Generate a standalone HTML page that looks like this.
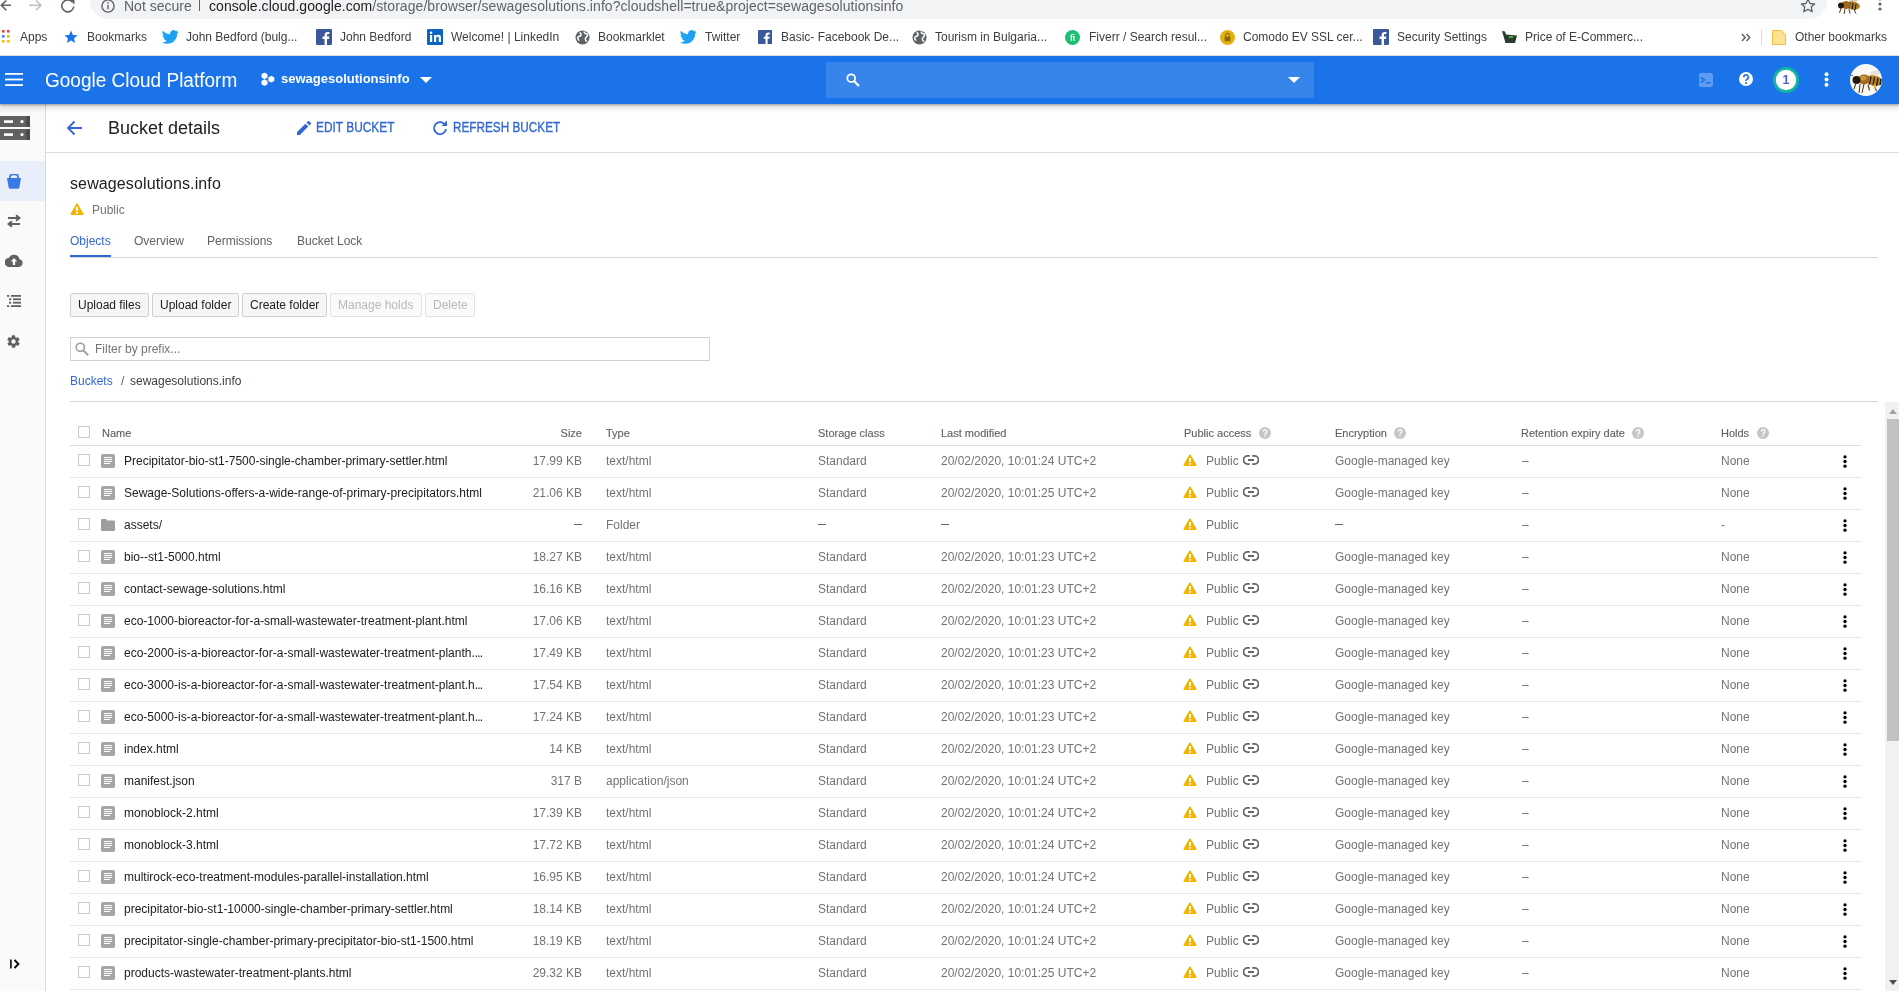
<!DOCTYPE html>
<html><head><meta charset="utf-8"><style>
*{box-sizing:border-box;margin:0;padding:0}
html,body{width:1899px;height:991px;overflow:hidden;background:#fff;font-family:"Liberation Sans",sans-serif;color:#202124;position:relative}
#wrap{position:absolute;left:0;top:0;width:1899px;height:991px;will-change:transform}
.a{position:absolute;white-space:nowrap}
#chrome{position:absolute;left:0;top:0;width:1899px;height:56px;background:#fff;z-index:4}
#omni{position:absolute;left:90px;top:-18px;width:1737px;height:37px;border-radius:18px;background:#f1f3f4}
#bmbar{position:absolute;left:0;top:19px;width:1899px;height:37px;border-bottom:1px solid #dadce0}
.bm{position:absolute;top:30px;font-size:12px;line-height:14px;color:#3c4043}
#hdr{position:absolute;left:0;top:56px;width:1899px;height:48px;background:#1a73e8;box-shadow:0 1px 2px rgba(0,0,0,.3),0 2px 6px 2px rgba(0,0,0,.15);z-index:3}
#side{position:absolute;left:0;top:104px;width:46px;height:887px;background:#fafafa;border-right:1px solid #dadada}
.row{position:absolute;left:0;width:1861px;height:32px}
.row::after{content:"";position:absolute;left:70px;right:0;bottom:0;height:1px;background:#e6e6e6}
.row .t{position:absolute;top:8px;font-size:12px;line-height:14px;white-space:nowrap}
.row .cb,.thead .cb{position:absolute;top:8px;width:12px;height:12px;border:1px solid #c8c8c8;background:#fff}
.row .ic{position:absolute;line-height:0}
.nm{color:#212121}
.dash{position:absolute;top:14px;width:8px;height:1px;background:#666}
.g{color:#737373}
.thead{position:absolute;left:0;top:414px;width:1861px;height:32px}
.thead::after{content:"";position:absolute;left:70px;right:0;bottom:0;height:1px;background:#dcdcdc}
.th{position:absolute;top:13px;font-size:11px;line-height:13px;color:#5f6368;-webkit-text-stroke:0.15px #5f6368;white-space:nowrap}
.btn{position:absolute;top:293px;height:24px;border:1px solid #d0d0d0;border-radius:2px;background:#f6f6f6;font-size:12px;line-height:22px;padding:0 7px;color:#212121;white-space:nowrap}
.btn.dis{color:#b8b8b8;border-color:#e3e3e3;background:#fafafa}
</style></head><body><div id="wrap">
<div id="chrome">
  <div id="omni"></div>
  <svg class="a" style="left:0;top:0" width="12" height="13" viewBox="0 0 12 13"><path d="M11 5.3H2M6.3 0.5L1.3 5.3l5 5" fill="none" stroke="#5f6368" stroke-width="1.6"/></svg>
  <svg class="a" style="left:29px;top:0" width="14" height="13" viewBox="0 0 14 13"><path d="M0 5.3h11.5M7 0.5l5 4.8-5 5" fill="none" stroke="#bdc1c6" stroke-width="1.6"/></svg>
  <svg class="a" style="left:60px;top:-1px" width="16" height="14" viewBox="0 0 16 14"><path d="M12.6 3.2A6 6 0 1 0 13.8 7.5" fill="none" stroke="#5f6368" stroke-width="1.6"/><path d="M9.3 0.2h5.2v5.2z" fill="#5f6368"/></svg>
  <svg class="a" style="left:101px;top:-1px" width="14" height="14" viewBox="0 0 14 14"><circle cx="7" cy="7" r="6.1" fill="none" stroke="#5f6368" stroke-width="1.4"/><rect x="6.3" y="5.8" width="1.4" height="4.4" fill="#5f6368"/><rect x="6.3" y="3" width="1.4" height="1.5" fill="#5f6368"/></svg>
  <span class="a" style="left:124px;top:-2px;font-size:14px;line-height:16px;color:#5f6368">Not secure</span>
  <span class="a" style="left:199px;top:-2px;width:1px;height:13px;background:#5f6368"></span>
  <span class="a" style="left:209px;top:-2px;font-size:14px;line-height:16px;letter-spacing:0.06px;color:#202124">console.cloud.google.com<span style="color:#5f6368">/storage/browser/sewagesolutions.info?cloudshell=true&amp;project=sewagesolutionsinfo</span></span>
  <svg class="a" style="left:1800px;top:-2px" width="16" height="15" viewBox="0 0 16 15"><path d="M8 1.2l2 4.3 4.6.5-3.4 3.1 1 4.6L8 11.4l-4.2 2.3 1-4.6L1.4 6l4.6-.5z" fill="none" stroke="#5f6368" stroke-width="1.3" stroke-linejoin="round"/></svg>
  <svg class="a" style="left:1837px;top:-3px" width="24" height="17" viewBox="0 0 24 17"><path d="M12 3c3-3 8-3 11-1-2 2-5 3-9 3z" fill="#d8d0c0"/><ellipse cx="16" cy="8.5" rx="7" ry="4" transform="rotate(10 16 8.5)" fill="#b0802a"/><path d="M13 5.5l-1 6M16 6l-1 6.5M19 7l-1 6" stroke="#2a1c0c" stroke-width="1.2"/><ellipse cx="9" cy="8" rx="4.5" ry="4" fill="#a06820"/><ellipse cx="4" cy="8.5" rx="3" ry="3" fill="#24180a"/><path d="M4 11l-1.5 5M8 12l-1 5M12 12l1 4.5M17 12.5l2 4" stroke="#5a3a14" stroke-width="1"/></svg>
  <svg class="a" style="left:1878px;top:-3px" width="4" height="14" viewBox="0 0 4 14"><circle cx="2" cy="2" r="1.6" fill="#5f6368"/><circle cx="2" cy="7" r="1.6" fill="#5f6368"/><circle cx="2" cy="12" r="1.6" fill="#5f6368"/></svg>
  <div id="bmbar"></div>
  <!-- bookmarks -->
  <svg class="a" style="left:2px;top:30px" width="9" height="13" viewBox="0 0 9 13"><rect x="0" y="0" width="2.6" height="2.6" fill="#ea4335"/><rect x="5" y="0" width="2.6" height="2.6" fill="#ea4335"/><rect x="0" y="5" width="2.6" height="2.6" fill="#4285f4"/><rect x="5" y="5" width="2.6" height="2.6" fill="#f4b400"/><rect x="0" y="10" width="2.6" height="2.6" fill="#fbbc04"/><rect x="5" y="10" width="2.6" height="2.6" fill="#fbbc04"/></svg>
  <span class="bm" style="left:20px">Apps</span>
  <svg class="a" style="left:64px;top:30px" width="14" height="14" viewBox="0 0 14 14"><path d="M7 0.6l1.9 4.3 4.6.4-3.5 3.1 1.1 4.6L7 10.6 2.9 13l1.1-4.6L.5 5.3l4.6-.4z" fill="#1a73e8"/></svg>
  <span class="bm" style="left:87px">Bookmarks</span>
  <svg class="a" style="left:162px;top:30px" width="17" height="14" viewBox="0 0 24 20"><path d="M23.6 2.4c-.9.4-1.8.6-2.8.8 1-.6 1.8-1.5 2.1-2.7-.9.6-2 1-3.1 1.2A4.9 4.9 0 0 0 11.5 6.2 13.9 13.9 0 0 1 1.4 1a4.9 4.9 0 0 0 1.5 6.6c-.8 0-1.6-.2-2.2-.6 0 2.4 1.7 4.4 3.9 4.8-.7.2-1.5.2-2.2.1.6 2 2.4 3.4 4.6 3.4A9.9 9.9 0 0 1 0 17.4 14 14 0 0 0 7.5 19.6c9 0 14-7.5 14-14v-.6c1-.7 1.8-1.6 2.1-2.6z" fill="#1da1f2"/></svg>
  <span class="bm" style="left:186px">John Bedford (bulg...</span>
  <svg class="a" style="left:316px;top:29px" width="16" height="16" viewBox="0 0 16 16"><rect width="16" height="16" rx="1" fill="#3b5998"/><path d="M11 16V10h2l.3-2.4H11V6.2c0-.7.2-1.1 1.2-1.1h1.2V3c-.2 0-1-.1-1.8-.1-1.8 0-3 1.1-3 3.1v1.6h-2V10h2v6z" fill="#fff"/></svg>
  <span class="bm" style="left:340px">John Bedford</span>
  <svg class="a" style="left:427px;top:29px" width="16" height="16" viewBox="0 0 16 16"><rect width="16" height="16" rx="1" fill="#0a66c2"/><rect x="3" y="6" width="2.2" height="7" fill="#fff"/><circle cx="4.1" cy="3.8" r="1.3" fill="#fff"/><path d="M7 6h2.1v1c.4-.7 1.2-1.2 2.3-1.2 2 0 2.6 1.2 2.6 3.2V13h-2.2V9.4c0-.9-.2-1.6-1.1-1.6-1 0-1.5.7-1.5 1.7V13H7z" fill="#fff"/></svg>
  <span class="bm" style="left:451px">Welcome! | LinkedIn</span>
  <svg class="a" style="left:575px;top:30px" width="15" height="15" viewBox="0 0 16 16"><circle cx="8" cy="8" r="7.5" fill="#5f6368"/><path d="M5 2.5c1.5 1 2 2.5 1 3.5s-2.5.5-3 2 1 2 1 3.5M10 1.5c-.5 1.5.5 2.5 2 2.5s1.5 1.5 1 2.5-2 1.5-2 3 1 1.5 1.5 3" fill="none" stroke="#fff" stroke-width="1.6"/></svg>
  <span class="bm" style="left:598px">Bookmarklet</span>
  <svg class="a" style="left:680px;top:30px" width="17" height="14" viewBox="0 0 24 20"><path d="M23.6 2.4c-.9.4-1.8.6-2.8.8 1-.6 1.8-1.5 2.1-2.7-.9.6-2 1-3.1 1.2A4.9 4.9 0 0 0 11.5 6.2 13.9 13.9 0 0 1 1.4 1a4.9 4.9 0 0 0 1.5 6.6c-.8 0-1.6-.2-2.2-.6 0 2.4 1.7 4.4 3.9 4.8-.7.2-1.5.2-2.2.1.6 2 2.4 3.4 4.6 3.4A9.9 9.9 0 0 1 0 17.4 14 14 0 0 0 7.5 19.6c9 0 14-7.5 14-14v-.6c1-.7 1.8-1.6 2.1-2.6z" fill="#1da1f2"/></svg>
  <span class="bm" style="left:705px">Twitter</span>
  <svg class="a" style="left:758px;top:29px" width="14" height="16" viewBox="0 0 16 16"><rect width="16" height="16" rx="1" fill="#3b5998"/><path d="M11 16V10h2l.3-2.4H11V6.2c0-.7.2-1.1 1.2-1.1h1.2V3c-.2 0-1-.1-1.8-.1-1.8 0-3 1.1-3 3.1v1.6h-2V10h2v6z" fill="#fff"/></svg>
  <span class="bm" style="left:781px">Basic- Facebook De...</span>
  <svg class="a" style="left:912px;top:30px" width="15" height="15" viewBox="0 0 16 16"><circle cx="8" cy="8" r="7.5" fill="#5f6368"/><path d="M5 2.5c1.5 1 2 2.5 1 3.5s-2.5.5-3 2 1 2 1 3.5M10 1.5c-.5 1.5.5 2.5 2 2.5s1.5 1.5 1 2.5-2 1.5-2 3 1 1.5 1.5 3" fill="none" stroke="#fff" stroke-width="1.6"/></svg>
  <span class="bm" style="left:935px">Tourism in Bulgaria...</span>
  <svg class="a" style="left:1065px;top:30px" width="15" height="15" viewBox="0 0 16 16"><circle cx="8" cy="8" r="8" fill="#1dbf73"/><text x="8" y="11.5" font-size="9" font-weight="700" text-anchor="middle" fill="#fff" font-family="Liberation Sans">fi</text></svg>
  <span class="bm" style="left:1089px">Fiverr / Search resul...</span>
  <svg class="a" style="left:1220px;top:30px" width="15" height="15" viewBox="0 0 16 16"><circle cx="8" cy="8" r="8" fill="#e2b010"/><rect x="5" y="7" width="6" height="5" fill="#8a6a00"/><path d="M6 7V5.5a2 2 0 0 1 4 0V7" fill="none" stroke="#8a6a00" stroke-width="1.2"/></svg>
  <span class="bm" style="left:1243px">Comodo EV SSL cer...</span>
  <svg class="a" style="left:1373px;top:29px" width="16" height="16" viewBox="0 0 16 16"><rect width="16" height="16" rx="1" fill="#3b5998"/><path d="M11 16V10h2l.3-2.4H11V6.2c0-.7.2-1.1 1.2-1.1h1.2V3c-.2 0-1-.1-1.8-.1-1.8 0-3 1.1-3 3.1v1.6h-2V10h2v6z" fill="#fff"/></svg>
  <span class="bm" style="left:1397px">Security Settings</span>
  <svg class="a" style="left:1502px;top:30px" width="16" height="14" viewBox="0 0 16 14"><path d="M0 1l3 .5 1 3 11 1-2 7.5H3.5z" fill="#2e3a2e"/><path d="M7 6h4v2H7z" fill="#3ab54a"/></svg>
  <span class="bm" style="left:1525px">Price of E-Commerc...</span>
  <svg class="a" style="left:1741px;top:33px" width="10" height="9" viewBox="0 0 10 9"><path d="M1 1l3.2 3.5L1 8M5.5 1l3.2 3.5L5.5 8" fill="none" stroke="#5f6368" stroke-width="1.5"/></svg>
  <span class="a" style="left:1761px;top:29px;width:1px;height:16px;background:#dadce0"></span>
  <svg class="a" style="left:1772px;top:30px" width="14" height="15" viewBox="0 0 14 15"><path d="M0.5 0.5h9l4 4v10h-13z" fill="#fde293" stroke="#f2c043" stroke-width="1"/></svg>
  <span class="bm" style="left:1795px">Other bookmarks</span>
</div>
<div id="hdr">
  <svg class="a" style="left:5px;top:17px" width="18" height="13" viewBox="0 0 18 13"><rect y="0" width="18" height="1.8" fill="#fff"/><rect y="5.6" width="18" height="1.8" fill="#fff"/><rect y="11.2" width="18" height="1.8" fill="#fff"/></svg>
  <span class="a" style="left:45px;top:13px;font-size:20px;line-height:22px;transform:scaleX(.95);transform-origin:0 0;color:#fff">Google Cloud Platform</span>
  <svg class="a" style="left:261px;top:16px" width="14" height="14" viewBox="0 0 14 14"><path d="M3.5 0.5l3 1.7v3.4l-3 1.7-3-1.7V2.2z" fill="#fff"/><path d="M3.5 7.2l3 1.7v3.4l-3 1.7-3-1.7V8.9z" fill="#fff"/><path d="M10.3 3.8l3 1.7v3.4l-3 1.7-3-1.7V5.5z" fill="#fff"/></svg>
  <span class="a" style="left:281px;top:15px;font-size:13px;line-height:16px;font-weight:700;color:#fff">sewagesolutionsinfo</span>
  <svg class="a" style="left:420px;top:21px" width="12" height="6" viewBox="0 0 12 6"><path d="M0 0h12L6 6z" fill="#fff"/></svg>
  <div class="a" style="left:826px;top:6px;width:488px;height:36px;background:rgba(255,255,255,.13);border-radius:2px"></div>
  <svg class="a" style="left:846px;top:17px" width="14" height="14" viewBox="0 0 14 14"><circle cx="5.2" cy="5.2" r="3.9" fill="none" stroke="#fff" stroke-width="1.8"/><path d="M8 8l5 5" stroke="#fff" stroke-width="2.2"/></svg>
  <svg class="a" style="left:1288px;top:21px" width="12" height="6" viewBox="0 0 12 6"><path d="M0 0h12L6 6z" fill="#fff"/></svg>
  <svg class="a" style="left:1699px;top:17px" width="14" height="14" viewBox="0 0 14 14"><rect width="14" height="14" rx="2" fill="#5f9bf0"/><path d="M2 4.5l3.5 2.5L2 9.5" fill="none" stroke="#1a73e8" stroke-width="1.6"/><rect x="7" y="9" width="4.5" height="1.6" fill="#1a73e8"/></svg>
  <svg class="a" style="left:1739px;top:16px" width="14" height="14" viewBox="0 0 14 14"><circle cx="7" cy="7" r="7" fill="#fff"/><path d="M4.7 5.3a2.3 2.3 0 1 1 3.4 2c-.8.4-1.1.8-1.1 1.6" fill="none" stroke="#1a73e8" stroke-width="1.7"/><rect x="6.1" y="10" width="1.8" height="1.8" fill="#1a73e8"/></svg>
  <svg class="a" style="left:1773px;top:11px" width="26" height="26" viewBox="0 0 26 26"><circle cx="13" cy="13" r="11.6" fill="#fff" stroke="#12b5a0" stroke-width="2.8"/><text x="13" y="17.4" font-size="12.5" font-weight="700" text-anchor="middle" fill="#4a5fd8" font-family="Liberation Sans">1</text></svg>
  <svg class="a" style="left:1824px;top:16px" width="5" height="15" viewBox="0 0 5 15"><circle cx="2.5" cy="2.2" r="2" fill="#fff"/><circle cx="2.5" cy="7.5" r="2" fill="#fff"/><circle cx="2.5" cy="12.8" r="2" fill="#fff"/></svg>
  <svg class="a" style="left:1850px;top:8px" width="32" height="32" viewBox="0 0 32 32"><defs><clipPath id="avc"><circle cx="16" cy="16" r="16"/></clipPath></defs><circle cx="16" cy="16" r="16" fill="#faf8f4"/><g clip-path="url(#avc)"><path d="M20 9c4-3 9-3 12-1-2 2-6 4-11 4z" fill="#e8e2d6"/><ellipse cx="24" cy="16.5" rx="9" ry="5" transform="rotate(12 24 16.5)" fill="#b8862e"/><path d="M21 12.5l-1.5 8M24.5 13l-1.5 8.5M28 14l-1.5 8M31 15l-1 6" stroke="#2a1c0c" stroke-width="1.4"/><ellipse cx="14" cy="15.5" rx="6" ry="5" fill="#a36a22"/><ellipse cx="13" cy="14" rx="3.5" ry="2.5" fill="#c8943c"/><ellipse cx="6.5" cy="16" rx="4" ry="4" fill="#24180a"/><path d="M6 19l-2 6M10 20l-1 9M14 20l-2 9M18 20.5l1.5 6M24 21l2.5 6" stroke="#5a3a14" stroke-width="1.1"/><path d="M24 20l1.5 4.5" stroke="#f2b01e" stroke-width="1.8"/><path d="M3 12c-1-1-2-1-3 0" stroke="#24180a" stroke-width="0.8" fill="none"/></g></svg>
</div>
<div id="side">
  <svg class="a" style="left:0;top:12px" width="31" height="25" viewBox="0 0 31 25"><rect x="0" y="0" width="30" height="11" fill="#616161"/><rect x="0" y="13" width="30" height="11" fill="#616161"/><rect x="26.5" y="0" width="3.5" height="11" fill="#4a4a4a"/><rect x="26.5" y="13" width="3.5" height="11" fill="#4a4a4a"/><rect x="4" y="4.3" width="9" height="2.6" fill="#fff"/><rect x="4" y="17.3" width="9" height="2.6" fill="#fff"/><circle cx="22" cy="5.6" r="1.6" fill="#fff"/><circle cx="22" cy="18.6" r="1.6" fill="#fff"/></svg>
  <div class="a" style="left:0;top:57px;width:45px;height:40px;background:#e8eefa"></div>
  <svg class="a" style="left:7px;top:70px" width="14" height="15" viewBox="0 0 14 15"><path d="M3 4V2.5C3 1 4.5 0.3 7 0.3s4 .7 4 2.2V4" fill="none" stroke="#3a78e6" stroke-width="1.8"/><path d="M0 4h14l-1.6 9.2c-.2 1-1 1.6-2 1.6H3.6c-1 0-1.8-.6-2-1.6z" fill="#3a78e6"/></svg>
  <svg class="a" style="left:7px;top:110px" width="14" height="14" viewBox="0 0 14 14"><path d="M1 4h10.5M9 1.2l3.5 2.8L9 6.8M13 10H2.5M5 7.2L1.5 10 5 12.8" fill="none" stroke="#616161" stroke-width="1.9"/></svg>
  <svg class="a" style="left:5px;top:150px" width="18" height="14" viewBox="0 0 18 14"><path d="M14.5 5.3A5.6 5.6 0 0 0 4 3.8 4.5 4.5 0 0 0 4.5 13h9.5a3.9 3.9 0 0 0 .5-7.7z" fill="#616161"/><path d="M9 4l-3.2 3.4h2.1V11h2.2V7.4h2.1z" fill="#fff"/></svg>
  <svg class="a" style="left:7px;top:191px" width="14" height="12" viewBox="0 0 14 12"><rect x="0" y="0" width="2.2" height="1.8" fill="#616161"/><rect x="4" y="0" width="10" height="1.8" fill="#616161"/><rect x="2" y="3.4" width="2.2" height="1.8" fill="#616161"/><rect x="6" y="3.4" width="8" height="1.8" fill="#616161"/><rect x="2" y="6.8" width="2.2" height="1.8" fill="#616161"/><rect x="6" y="6.8" width="8" height="1.8" fill="#616161"/><rect x="0" y="10.2" width="2.2" height="1.8" fill="#616161"/><rect x="4" y="10.2" width="10" height="1.8" fill="#616161"/></svg>
  <svg class="a" style="left:6px;top:230px" width="15" height="15" viewBox="0 0 24 24"><path d="M19.4 13a7.5 7.5 0 0 0 0-2l2.1-1.6c.2-.2.2-.4.1-.6l-2-3.5c-.1-.2-.4-.3-.6-.2l-2.5 1a7.3 7.3 0 0 0-1.7-1l-.4-2.7c0-.2-.2-.4-.5-.4h-4c-.2 0-.5.2-.5.4l-.4 2.7c-.6.2-1.2.6-1.7 1l-2.5-1c-.2-.1-.5 0-.6.2l-2 3.5c-.1.2-.1.5.1.6L4.6 11a7.5 7.5 0 0 0 0 2l-2.1 1.6c-.2.2-.2.4-.1.6l2 3.5c.1.2.4.3.6.2l2.5-1c.5.4 1.1.7 1.7 1l.4 2.7c0 .2.2.4.5.4h4c.2 0 .5-.2.5-.4l.4-2.7c.6-.3 1.2-.6 1.7-1l2.5 1c.2.1.5 0 .6-.2l2-3.5c.1-.2.1-.5-.1-.6zM12 15.5a3.5 3.5 0 1 1 0-7 3.5 3.5 0 0 1 0 7z" fill="#616161"/></svg>
  <svg class="a" style="left:10px;top:855px" width="11" height="10" viewBox="0 0 11 10"><rect x="0" y="0.5" width="1.8" height="9" fill="#202124"/><path d="M4.5 1l4 4-4 4" fill="none" stroke="#000" stroke-width="1.8"/></svg>
</div>
<div class="a" style="left:46px;top:152px;width:1853px;height:1px;background:#dadce0"></div>
<svg class="a" style="left:66px;top:120px" width="17" height="16" viewBox="0 0 17 16"><path d="M16 8H2.5M8.5 1.5L2 8l6.5 6.5" fill="none" stroke="#3367d6" stroke-width="1.8"/></svg>
<span class="a" style="left:108px;top:118px;font-size:18px;line-height:20px;color:#202124">Bucket details</span>
<svg class="a" style="left:297px;top:121px" width="14" height="14" viewBox="0 0 14 14"><path d="M0 11.1V14h2.9l8.4-8.4-2.9-2.9zM13.8 3.1c.3-.3.3-.8 0-1.1L12 .2c-.3-.3-.8-.3-1.1 0L9.5 1.6l2.9 2.9z" fill="#3367d6"/></svg>
<span class="a" style="left:316px;top:119px;font-size:14px;line-height:16px;-webkit-text-stroke:0.35px #3367d6;transform:scaleX(.85);transform-origin:0 0;color:#3367d6">EDIT BUCKET</span>
<svg class="a" style="left:432px;top:120px" width="16" height="16" viewBox="0 0 16 16"><path d="M13.2 5A6 6 0 1 0 14 9.2" fill="none" stroke="#3367d6" stroke-width="1.9"/><path d="M9.6 5.9H15V.5z" fill="#3367d6"/></svg>
<span class="a" style="left:453px;top:119px;font-size:14px;line-height:16px;-webkit-text-stroke:0.35px #3367d6;transform:scaleX(.84);transform-origin:0 0;color:#3367d6">REFRESH BUCKET</span>

<span class="a" style="left:70px;top:175px;font-size:16px;line-height:18px;letter-spacing:0.12px;color:#202124">sewagesolutions.info</span>
<span class="a" style="left:70px;top:203px;line-height:0"><svg width="14" height="13" viewBox="0 0 14 13"><path d="M7 1.2L12.8 11.1H1.2z" fill="#f4b400" stroke="#f4b400" stroke-width="1.6" stroke-linejoin="round"/><rect x="6" y="4" width="2" height="4" fill="#fff"/><rect x="6" y="9" width="2" height="1.8" fill="#fff"/></svg></span>
<span class="a" style="left:92px;top:203px;font-size:12px;line-height:14px;color:#757575">Public</span>
<span class="a" style="left:70px;top:234px;font-size:12px;line-height:14px;color:#3367d6">Objects</span>
<span class="a" style="left:134px;top:234px;font-size:12px;line-height:14px;color:#616161">Overview</span>
<span class="a" style="left:207px;top:234px;font-size:12px;line-height:14px;color:#616161">Permissions</span>
<span class="a" style="left:297px;top:234px;font-size:12px;line-height:14px;color:#616161">Bucket Lock</span>
<div class="a" style="left:70px;top:257px;width:1808px;height:1px;background:#d4d4d4"></div>
<div class="a" style="left:70px;top:255px;width:41px;height:2px;background:#3367d6"></div>

<span class="btn" style="left:70px;width:79px">Upload files</span>
<span class="btn" style="left:152px;width:87px">Upload folder</span>
<span class="btn" style="left:242px;width:85px">Create folder</span>
<span class="btn dis" style="left:330px;width:92px">Manage holds</span>
<span class="btn dis" style="left:425px;width:50px">Delete</span>

<div class="a" style="left:70px;top:337px;width:640px;height:24px;border:1px solid #d0d0d0;background:#fff"></div>
<svg class="a" style="left:75px;top:342px" width="14" height="14" viewBox="0 0 14 14"><circle cx="5.3" cy="5.3" r="4.1" fill="none" stroke="#9e9e9e" stroke-width="1.6"/><path d="M8.2 8.2l5 5" stroke="#9e9e9e" stroke-width="2"/></svg>
<span class="a" style="left:95px;top:342px;font-size:12px;line-height:14px;color:#757575">Filter by prefix...</span>

<span class="a" style="left:70px;top:374px;font-size:12px;line-height:14px;color:#3367d6">Buckets</span>
<span class="a" style="left:121px;top:374px;font-size:12px;line-height:14px;color:#616161">/</span>
<span class="a" style="left:130px;top:374px;font-size:12px;line-height:14px;color:#3c4043">sewagesolutions.info</span>
<div class="a" style="left:70px;top:401px;width:1808px;height:1px;background:#d6d6d6"></div>

<div class="a" style="left:1885px;top:402px;width:14px;height:589px;background:#f1f1f1"></div>
<div class="a" style="left:1887px;top:419px;width:12px;height:322px;background:#c1c1c1"></div>
<svg class="a" style="left:1889px;top:409px" width="8" height="5" viewBox="0 0 8 5"><path d="M0 5L4 0l4 5z" fill="#a3a3a3"/></svg>
<svg class="a" style="left:1889px;top:980px" width="8" height="5" viewBox="0 0 8 5"><path d="M0 0h8L4 5z" fill="#505050"/></svg>


<div class="thead">
<span class="cb" style="left:78px;top:12px"></span>
<span class="th" style="left:102px">Name</span>
<span class="th" style="right:1279px">Size</span>
<span class="th" style="left:606px">Type</span>
<span class="th" style="left:818px">Storage class</span>
<span class="th" style="left:941px">Last modified</span>
<span class="th" style="left:1184px">Public access</span>
<span class="th" style="left:1335px">Encryption</span>
<span class="th" style="left:1521px">Retention expiry date</span>
<span class="th" style="left:1721px">Holds</span>
<span class="ic" style="position:absolute;line-height:0;left:1259px;top:13px"><svg width="12" height="12" viewBox="0 0 12 12"><circle cx="6" cy="6" r="6" fill="#c6c6c6"/><path d="M4.2 4.6a1.8 1.8 0 1 1 2.6 1.6c-.6.3-.8.6-.8 1.2" fill="none" stroke="#fff" stroke-width="1.3"/><rect x="5.35" y="8.3" width="1.3" height="1.3" fill="#fff"/></svg></span>
<span class="ic" style="position:absolute;line-height:0;left:1394px;top:13px"><svg width="12" height="12" viewBox="0 0 12 12"><circle cx="6" cy="6" r="6" fill="#c6c6c6"/><path d="M4.2 4.6a1.8 1.8 0 1 1 2.6 1.6c-.6.3-.8.6-.8 1.2" fill="none" stroke="#fff" stroke-width="1.3"/><rect x="5.35" y="8.3" width="1.3" height="1.3" fill="#fff"/></svg></span>
<span class="ic" style="position:absolute;line-height:0;left:1632px;top:13px"><svg width="12" height="12" viewBox="0 0 12 12"><circle cx="6" cy="6" r="6" fill="#c6c6c6"/><path d="M4.2 4.6a1.8 1.8 0 1 1 2.6 1.6c-.6.3-.8.6-.8 1.2" fill="none" stroke="#fff" stroke-width="1.3"/><rect x="5.35" y="8.3" width="1.3" height="1.3" fill="#fff"/></svg></span>
<span class="ic" style="position:absolute;line-height:0;left:1757px;top:13px"><svg width="12" height="12" viewBox="0 0 12 12"><circle cx="6" cy="6" r="6" fill="#c6c6c6"/><path d="M4.2 4.6a1.8 1.8 0 1 1 2.6 1.6c-.6.3-.8.6-.8 1.2" fill="none" stroke="#fff" stroke-width="1.3"/><rect x="5.35" y="8.3" width="1.3" height="1.3" fill="#fff"/></svg></span>
</div>
<div class="row" style="top:446px">
<span class="cb" style="left:78px"></span>
<span class="ic" style="left:101px;top:8px"><svg width="14" height="14" viewBox="0 0 14 14" shape-rendering="crispEdges"><rect x="0" y="0" width="14" height="14" rx="1.8" fill="#a6a6a6" shape-rendering="geometricPrecision"/><rect x="3" y="3" width="8" height="1" fill="#fff"/><rect x="3" y="5" width="8" height="1" fill="#fff"/><rect x="3" y="7" width="8" height="1" fill="#fff"/><rect x="3" y="9" width="6" height="1" fill="#fff"/></svg></span>
<span class="t nm" style="left:124px">Precipitator-bio-st1-7500-single-chamber-primary-settler.html</span>
<span class="t g r" style="right:1279px">17.99 KB</span>
<span class="t g" style="left:606px">text/html</span>
<span class="t g" style="left:818px">Standard</span><span class="t g" style="left:941px">20/02/2020, 10:01:24 UTC+2</span>
<span class="ic" style="left:1183px;top:8px"><svg width="14" height="13" viewBox="0 0 14 13"><path d="M7 1.2L12.8 11.1H1.2z" fill="#f4b400" stroke="#f4b400" stroke-width="1.6" stroke-linejoin="round"/><rect x="6" y="4" width="2" height="4" fill="#fff"/><rect x="6" y="9" width="2" height="1.8" fill="#fff"/></svg></span>
<span class="t g" style="left:1206px">Public</span>
<span class="ic" style="left:1243px;top:9px"><svg width="16" height="10" viewBox="0 0 16 10"><path d="M6.8 0.9H4.6a4.1 4.1 0 0 0 0 8.2h2.2M9.2 0.9h2.2a4.1 4.1 0 0 1 0 8.2H9.2M5 5h6" fill="none" stroke="#666" stroke-width="1.8"/></svg></span>
<span class="t g" style="left:1335px">Google-managed key</span>
<span class="t g" style="left:1522px">–</span>
<span class="t g" style="left:1721px">None</span>
<span class="ic" style="left:1843px;top:9px"><svg width="4" height="13" viewBox="0 0 4 13"><circle cx="2" cy="1.8" r="1.65" fill="#000"/><circle cx="2" cy="6.5" r="1.65" fill="#000"/><circle cx="2" cy="11.2" r="1.65" fill="#000"/></svg></span>
</div>
<div class="row" style="top:478px">
<span class="cb" style="left:78px"></span>
<span class="ic" style="left:101px;top:8px"><svg width="14" height="14" viewBox="0 0 14 14" shape-rendering="crispEdges"><rect x="0" y="0" width="14" height="14" rx="1.8" fill="#a6a6a6" shape-rendering="geometricPrecision"/><rect x="3" y="3" width="8" height="1" fill="#fff"/><rect x="3" y="5" width="8" height="1" fill="#fff"/><rect x="3" y="7" width="8" height="1" fill="#fff"/><rect x="3" y="9" width="6" height="1" fill="#fff"/></svg></span>
<span class="t nm" style="left:124px">Sewage-Solutions-offers-a-wide-range-of-primary-precipitators.html</span>
<span class="t g r" style="right:1279px">21.06 KB</span>
<span class="t g" style="left:606px">text/html</span>
<span class="t g" style="left:818px">Standard</span><span class="t g" style="left:941px">20/02/2020, 10:01:25 UTC+2</span>
<span class="ic" style="left:1183px;top:8px"><svg width="14" height="13" viewBox="0 0 14 13"><path d="M7 1.2L12.8 11.1H1.2z" fill="#f4b400" stroke="#f4b400" stroke-width="1.6" stroke-linejoin="round"/><rect x="6" y="4" width="2" height="4" fill="#fff"/><rect x="6" y="9" width="2" height="1.8" fill="#fff"/></svg></span>
<span class="t g" style="left:1206px">Public</span>
<span class="ic" style="left:1243px;top:9px"><svg width="16" height="10" viewBox="0 0 16 10"><path d="M6.8 0.9H4.6a4.1 4.1 0 0 0 0 8.2h2.2M9.2 0.9h2.2a4.1 4.1 0 0 1 0 8.2H9.2M5 5h6" fill="none" stroke="#666" stroke-width="1.8"/></svg></span>
<span class="t g" style="left:1335px">Google-managed key</span>
<span class="t g" style="left:1522px">–</span>
<span class="t g" style="left:1721px">None</span>
<span class="ic" style="left:1843px;top:9px"><svg width="4" height="13" viewBox="0 0 4 13"><circle cx="2" cy="1.8" r="1.65" fill="#000"/><circle cx="2" cy="6.5" r="1.65" fill="#000"/><circle cx="2" cy="11.2" r="1.65" fill="#000"/></svg></span>
</div>
<div class="row" style="top:510px">
<span class="cb" style="left:78px"></span>
<span class="ic" style="left:101px;top:9px"><svg width="14" height="12" viewBox="0 0 14 12"><path d="M0 1.2C0 .5.5 0 1.2 0H5l1.4 1.6h6.4c.7 0 1.2.5 1.2 1.2v8c0 .7-.5 1.2-1.2 1.2H1.2C.5 12 0 11.5 0 10.8z" fill="#9e9e9e"/></svg></span>
<span class="t nm" style="left:124px">assets/</span>
<span class="dash" style="left:574px"></span>
<span class="t g" style="left:606px">Folder</span>
<span class="dash" style="left:818px"></span><span class="dash" style="left:941px"></span>
<span class="ic" style="left:1183px;top:8px"><svg width="14" height="13" viewBox="0 0 14 13"><path d="M7 1.2L12.8 11.1H1.2z" fill="#f4b400" stroke="#f4b400" stroke-width="1.6" stroke-linejoin="round"/><rect x="6" y="4" width="2" height="4" fill="#fff"/><rect x="6" y="9" width="2" height="1.8" fill="#fff"/></svg></span>
<span class="t g" style="left:1206px">Public</span>
<span class="ic" style="left:1243px;top:9px"></span>
<span class="dash" style="left:1335px"></span>
<span class="t g" style="left:1522px">–</span>
<span class="t g" style="left:1721px">-</span>
<span class="ic" style="left:1843px;top:9px"><svg width="4" height="13" viewBox="0 0 4 13"><circle cx="2" cy="1.8" r="1.65" fill="#000"/><circle cx="2" cy="6.5" r="1.65" fill="#000"/><circle cx="2" cy="11.2" r="1.65" fill="#000"/></svg></span>
</div>
<div class="row" style="top:542px">
<span class="cb" style="left:78px"></span>
<span class="ic" style="left:101px;top:8px"><svg width="14" height="14" viewBox="0 0 14 14" shape-rendering="crispEdges"><rect x="0" y="0" width="14" height="14" rx="1.8" fill="#a6a6a6" shape-rendering="geometricPrecision"/><rect x="3" y="3" width="8" height="1" fill="#fff"/><rect x="3" y="5" width="8" height="1" fill="#fff"/><rect x="3" y="7" width="8" height="1" fill="#fff"/><rect x="3" y="9" width="6" height="1" fill="#fff"/></svg></span>
<span class="t nm" style="left:124px">bio--st1-5000.html</span>
<span class="t g r" style="right:1279px">18.27 KB</span>
<span class="t g" style="left:606px">text/html</span>
<span class="t g" style="left:818px">Standard</span><span class="t g" style="left:941px">20/02/2020, 10:01:23 UTC+2</span>
<span class="ic" style="left:1183px;top:8px"><svg width="14" height="13" viewBox="0 0 14 13"><path d="M7 1.2L12.8 11.1H1.2z" fill="#f4b400" stroke="#f4b400" stroke-width="1.6" stroke-linejoin="round"/><rect x="6" y="4" width="2" height="4" fill="#fff"/><rect x="6" y="9" width="2" height="1.8" fill="#fff"/></svg></span>
<span class="t g" style="left:1206px">Public</span>
<span class="ic" style="left:1243px;top:9px"><svg width="16" height="10" viewBox="0 0 16 10"><path d="M6.8 0.9H4.6a4.1 4.1 0 0 0 0 8.2h2.2M9.2 0.9h2.2a4.1 4.1 0 0 1 0 8.2H9.2M5 5h6" fill="none" stroke="#666" stroke-width="1.8"/></svg></span>
<span class="t g" style="left:1335px">Google-managed key</span>
<span class="t g" style="left:1522px">–</span>
<span class="t g" style="left:1721px">None</span>
<span class="ic" style="left:1843px;top:9px"><svg width="4" height="13" viewBox="0 0 4 13"><circle cx="2" cy="1.8" r="1.65" fill="#000"/><circle cx="2" cy="6.5" r="1.65" fill="#000"/><circle cx="2" cy="11.2" r="1.65" fill="#000"/></svg></span>
</div>
<div class="row" style="top:574px">
<span class="cb" style="left:78px"></span>
<span class="ic" style="left:101px;top:8px"><svg width="14" height="14" viewBox="0 0 14 14" shape-rendering="crispEdges"><rect x="0" y="0" width="14" height="14" rx="1.8" fill="#a6a6a6" shape-rendering="geometricPrecision"/><rect x="3" y="3" width="8" height="1" fill="#fff"/><rect x="3" y="5" width="8" height="1" fill="#fff"/><rect x="3" y="7" width="8" height="1" fill="#fff"/><rect x="3" y="9" width="6" height="1" fill="#fff"/></svg></span>
<span class="t nm" style="left:124px">contact-sewage-solutions.html</span>
<span class="t g r" style="right:1279px">16.16 KB</span>
<span class="t g" style="left:606px">text/html</span>
<span class="t g" style="left:818px">Standard</span><span class="t g" style="left:941px">20/02/2020, 10:01:23 UTC+2</span>
<span class="ic" style="left:1183px;top:8px"><svg width="14" height="13" viewBox="0 0 14 13"><path d="M7 1.2L12.8 11.1H1.2z" fill="#f4b400" stroke="#f4b400" stroke-width="1.6" stroke-linejoin="round"/><rect x="6" y="4" width="2" height="4" fill="#fff"/><rect x="6" y="9" width="2" height="1.8" fill="#fff"/></svg></span>
<span class="t g" style="left:1206px">Public</span>
<span class="ic" style="left:1243px;top:9px"><svg width="16" height="10" viewBox="0 0 16 10"><path d="M6.8 0.9H4.6a4.1 4.1 0 0 0 0 8.2h2.2M9.2 0.9h2.2a4.1 4.1 0 0 1 0 8.2H9.2M5 5h6" fill="none" stroke="#666" stroke-width="1.8"/></svg></span>
<span class="t g" style="left:1335px">Google-managed key</span>
<span class="t g" style="left:1522px">–</span>
<span class="t g" style="left:1721px">None</span>
<span class="ic" style="left:1843px;top:9px"><svg width="4" height="13" viewBox="0 0 4 13"><circle cx="2" cy="1.8" r="1.65" fill="#000"/><circle cx="2" cy="6.5" r="1.65" fill="#000"/><circle cx="2" cy="11.2" r="1.65" fill="#000"/></svg></span>
</div>
<div class="row" style="top:606px">
<span class="cb" style="left:78px"></span>
<span class="ic" style="left:101px;top:8px"><svg width="14" height="14" viewBox="0 0 14 14" shape-rendering="crispEdges"><rect x="0" y="0" width="14" height="14" rx="1.8" fill="#a6a6a6" shape-rendering="geometricPrecision"/><rect x="3" y="3" width="8" height="1" fill="#fff"/><rect x="3" y="5" width="8" height="1" fill="#fff"/><rect x="3" y="7" width="8" height="1" fill="#fff"/><rect x="3" y="9" width="6" height="1" fill="#fff"/></svg></span>
<span class="t nm" style="left:124px">eco-1000-bioreactor-for-a-small-wastewater-treatment-plant.html</span>
<span class="t g r" style="right:1279px">17.06 KB</span>
<span class="t g" style="left:606px">text/html</span>
<span class="t g" style="left:818px">Standard</span><span class="t g" style="left:941px">20/02/2020, 10:01:23 UTC+2</span>
<span class="ic" style="left:1183px;top:8px"><svg width="14" height="13" viewBox="0 0 14 13"><path d="M7 1.2L12.8 11.1H1.2z" fill="#f4b400" stroke="#f4b400" stroke-width="1.6" stroke-linejoin="round"/><rect x="6" y="4" width="2" height="4" fill="#fff"/><rect x="6" y="9" width="2" height="1.8" fill="#fff"/></svg></span>
<span class="t g" style="left:1206px">Public</span>
<span class="ic" style="left:1243px;top:9px"><svg width="16" height="10" viewBox="0 0 16 10"><path d="M6.8 0.9H4.6a4.1 4.1 0 0 0 0 8.2h2.2M9.2 0.9h2.2a4.1 4.1 0 0 1 0 8.2H9.2M5 5h6" fill="none" stroke="#666" stroke-width="1.8"/></svg></span>
<span class="t g" style="left:1335px">Google-managed key</span>
<span class="t g" style="left:1522px">–</span>
<span class="t g" style="left:1721px">None</span>
<span class="ic" style="left:1843px;top:9px"><svg width="4" height="13" viewBox="0 0 4 13"><circle cx="2" cy="1.8" r="1.65" fill="#000"/><circle cx="2" cy="6.5" r="1.65" fill="#000"/><circle cx="2" cy="11.2" r="1.65" fill="#000"/></svg></span>
</div>
<div class="row" style="top:638px">
<span class="cb" style="left:78px"></span>
<span class="ic" style="left:101px;top:8px"><svg width="14" height="14" viewBox="0 0 14 14" shape-rendering="crispEdges"><rect x="0" y="0" width="14" height="14" rx="1.8" fill="#a6a6a6" shape-rendering="geometricPrecision"/><rect x="3" y="3" width="8" height="1" fill="#fff"/><rect x="3" y="5" width="8" height="1" fill="#fff"/><rect x="3" y="7" width="8" height="1" fill="#fff"/><rect x="3" y="9" width="6" height="1" fill="#fff"/></svg></span>
<span class="t nm" style="left:124px">eco-2000-is-a-bioreactor-for-a-small-wastewater-treatment-planth.<span style='letter-spacing:-0.9px'>...</span></span>
<span class="t g r" style="right:1279px">17.49 KB</span>
<span class="t g" style="left:606px">text/html</span>
<span class="t g" style="left:818px">Standard</span><span class="t g" style="left:941px">20/02/2020, 10:01:23 UTC+2</span>
<span class="ic" style="left:1183px;top:8px"><svg width="14" height="13" viewBox="0 0 14 13"><path d="M7 1.2L12.8 11.1H1.2z" fill="#f4b400" stroke="#f4b400" stroke-width="1.6" stroke-linejoin="round"/><rect x="6" y="4" width="2" height="4" fill="#fff"/><rect x="6" y="9" width="2" height="1.8" fill="#fff"/></svg></span>
<span class="t g" style="left:1206px">Public</span>
<span class="ic" style="left:1243px;top:9px"><svg width="16" height="10" viewBox="0 0 16 10"><path d="M6.8 0.9H4.6a4.1 4.1 0 0 0 0 8.2h2.2M9.2 0.9h2.2a4.1 4.1 0 0 1 0 8.2H9.2M5 5h6" fill="none" stroke="#666" stroke-width="1.8"/></svg></span>
<span class="t g" style="left:1335px">Google-managed key</span>
<span class="t g" style="left:1522px">–</span>
<span class="t g" style="left:1721px">None</span>
<span class="ic" style="left:1843px;top:9px"><svg width="4" height="13" viewBox="0 0 4 13"><circle cx="2" cy="1.8" r="1.65" fill="#000"/><circle cx="2" cy="6.5" r="1.65" fill="#000"/><circle cx="2" cy="11.2" r="1.65" fill="#000"/></svg></span>
</div>
<div class="row" style="top:670px">
<span class="cb" style="left:78px"></span>
<span class="ic" style="left:101px;top:8px"><svg width="14" height="14" viewBox="0 0 14 14" shape-rendering="crispEdges"><rect x="0" y="0" width="14" height="14" rx="1.8" fill="#a6a6a6" shape-rendering="geometricPrecision"/><rect x="3" y="3" width="8" height="1" fill="#fff"/><rect x="3" y="5" width="8" height="1" fill="#fff"/><rect x="3" y="7" width="8" height="1" fill="#fff"/><rect x="3" y="9" width="6" height="1" fill="#fff"/></svg></span>
<span class="t nm" style="left:124px">eco-3000-is-a-bioreactor-for-a-small-wastewater-treatment-plant.h<span style='letter-spacing:-0.9px'>...</span></span>
<span class="t g r" style="right:1279px">17.54 KB</span>
<span class="t g" style="left:606px">text/html</span>
<span class="t g" style="left:818px">Standard</span><span class="t g" style="left:941px">20/02/2020, 10:01:23 UTC+2</span>
<span class="ic" style="left:1183px;top:8px"><svg width="14" height="13" viewBox="0 0 14 13"><path d="M7 1.2L12.8 11.1H1.2z" fill="#f4b400" stroke="#f4b400" stroke-width="1.6" stroke-linejoin="round"/><rect x="6" y="4" width="2" height="4" fill="#fff"/><rect x="6" y="9" width="2" height="1.8" fill="#fff"/></svg></span>
<span class="t g" style="left:1206px">Public</span>
<span class="ic" style="left:1243px;top:9px"><svg width="16" height="10" viewBox="0 0 16 10"><path d="M6.8 0.9H4.6a4.1 4.1 0 0 0 0 8.2h2.2M9.2 0.9h2.2a4.1 4.1 0 0 1 0 8.2H9.2M5 5h6" fill="none" stroke="#666" stroke-width="1.8"/></svg></span>
<span class="t g" style="left:1335px">Google-managed key</span>
<span class="t g" style="left:1522px">–</span>
<span class="t g" style="left:1721px">None</span>
<span class="ic" style="left:1843px;top:9px"><svg width="4" height="13" viewBox="0 0 4 13"><circle cx="2" cy="1.8" r="1.65" fill="#000"/><circle cx="2" cy="6.5" r="1.65" fill="#000"/><circle cx="2" cy="11.2" r="1.65" fill="#000"/></svg></span>
</div>
<div class="row" style="top:702px">
<span class="cb" style="left:78px"></span>
<span class="ic" style="left:101px;top:8px"><svg width="14" height="14" viewBox="0 0 14 14" shape-rendering="crispEdges"><rect x="0" y="0" width="14" height="14" rx="1.8" fill="#a6a6a6" shape-rendering="geometricPrecision"/><rect x="3" y="3" width="8" height="1" fill="#fff"/><rect x="3" y="5" width="8" height="1" fill="#fff"/><rect x="3" y="7" width="8" height="1" fill="#fff"/><rect x="3" y="9" width="6" height="1" fill="#fff"/></svg></span>
<span class="t nm" style="left:124px">eco-5000-is-a-bioreactor-for-a-small-wastewater-treatment-plant.h<span style='letter-spacing:-0.9px'>...</span></span>
<span class="t g r" style="right:1279px">17.24 KB</span>
<span class="t g" style="left:606px">text/html</span>
<span class="t g" style="left:818px">Standard</span><span class="t g" style="left:941px">20/02/2020, 10:01:23 UTC+2</span>
<span class="ic" style="left:1183px;top:8px"><svg width="14" height="13" viewBox="0 0 14 13"><path d="M7 1.2L12.8 11.1H1.2z" fill="#f4b400" stroke="#f4b400" stroke-width="1.6" stroke-linejoin="round"/><rect x="6" y="4" width="2" height="4" fill="#fff"/><rect x="6" y="9" width="2" height="1.8" fill="#fff"/></svg></span>
<span class="t g" style="left:1206px">Public</span>
<span class="ic" style="left:1243px;top:9px"><svg width="16" height="10" viewBox="0 0 16 10"><path d="M6.8 0.9H4.6a4.1 4.1 0 0 0 0 8.2h2.2M9.2 0.9h2.2a4.1 4.1 0 0 1 0 8.2H9.2M5 5h6" fill="none" stroke="#666" stroke-width="1.8"/></svg></span>
<span class="t g" style="left:1335px">Google-managed key</span>
<span class="t g" style="left:1522px">–</span>
<span class="t g" style="left:1721px">None</span>
<span class="ic" style="left:1843px;top:9px"><svg width="4" height="13" viewBox="0 0 4 13"><circle cx="2" cy="1.8" r="1.65" fill="#000"/><circle cx="2" cy="6.5" r="1.65" fill="#000"/><circle cx="2" cy="11.2" r="1.65" fill="#000"/></svg></span>
</div>
<div class="row" style="top:734px">
<span class="cb" style="left:78px"></span>
<span class="ic" style="left:101px;top:8px"><svg width="14" height="14" viewBox="0 0 14 14" shape-rendering="crispEdges"><rect x="0" y="0" width="14" height="14" rx="1.8" fill="#a6a6a6" shape-rendering="geometricPrecision"/><rect x="3" y="3" width="8" height="1" fill="#fff"/><rect x="3" y="5" width="8" height="1" fill="#fff"/><rect x="3" y="7" width="8" height="1" fill="#fff"/><rect x="3" y="9" width="6" height="1" fill="#fff"/></svg></span>
<span class="t nm" style="left:124px">index.html</span>
<span class="t g r" style="right:1279px">14 KB</span>
<span class="t g" style="left:606px">text/html</span>
<span class="t g" style="left:818px">Standard</span><span class="t g" style="left:941px">20/02/2020, 10:01:23 UTC+2</span>
<span class="ic" style="left:1183px;top:8px"><svg width="14" height="13" viewBox="0 0 14 13"><path d="M7 1.2L12.8 11.1H1.2z" fill="#f4b400" stroke="#f4b400" stroke-width="1.6" stroke-linejoin="round"/><rect x="6" y="4" width="2" height="4" fill="#fff"/><rect x="6" y="9" width="2" height="1.8" fill="#fff"/></svg></span>
<span class="t g" style="left:1206px">Public</span>
<span class="ic" style="left:1243px;top:9px"><svg width="16" height="10" viewBox="0 0 16 10"><path d="M6.8 0.9H4.6a4.1 4.1 0 0 0 0 8.2h2.2M9.2 0.9h2.2a4.1 4.1 0 0 1 0 8.2H9.2M5 5h6" fill="none" stroke="#666" stroke-width="1.8"/></svg></span>
<span class="t g" style="left:1335px">Google-managed key</span>
<span class="t g" style="left:1522px">–</span>
<span class="t g" style="left:1721px">None</span>
<span class="ic" style="left:1843px;top:9px"><svg width="4" height="13" viewBox="0 0 4 13"><circle cx="2" cy="1.8" r="1.65" fill="#000"/><circle cx="2" cy="6.5" r="1.65" fill="#000"/><circle cx="2" cy="11.2" r="1.65" fill="#000"/></svg></span>
</div>
<div class="row" style="top:766px">
<span class="cb" style="left:78px"></span>
<span class="ic" style="left:101px;top:8px"><svg width="14" height="14" viewBox="0 0 14 14" shape-rendering="crispEdges"><rect x="0" y="0" width="14" height="14" rx="1.8" fill="#a6a6a6" shape-rendering="geometricPrecision"/><rect x="3" y="3" width="8" height="1" fill="#fff"/><rect x="3" y="5" width="8" height="1" fill="#fff"/><rect x="3" y="7" width="8" height="1" fill="#fff"/><rect x="3" y="9" width="6" height="1" fill="#fff"/></svg></span>
<span class="t nm" style="left:124px">manifest.json</span>
<span class="t g r" style="right:1279px">317 B</span>
<span class="t g" style="left:606px">application/json</span>
<span class="t g" style="left:818px">Standard</span><span class="t g" style="left:941px">20/02/2020, 10:01:24 UTC+2</span>
<span class="ic" style="left:1183px;top:8px"><svg width="14" height="13" viewBox="0 0 14 13"><path d="M7 1.2L12.8 11.1H1.2z" fill="#f4b400" stroke="#f4b400" stroke-width="1.6" stroke-linejoin="round"/><rect x="6" y="4" width="2" height="4" fill="#fff"/><rect x="6" y="9" width="2" height="1.8" fill="#fff"/></svg></span>
<span class="t g" style="left:1206px">Public</span>
<span class="ic" style="left:1243px;top:9px"><svg width="16" height="10" viewBox="0 0 16 10"><path d="M6.8 0.9H4.6a4.1 4.1 0 0 0 0 8.2h2.2M9.2 0.9h2.2a4.1 4.1 0 0 1 0 8.2H9.2M5 5h6" fill="none" stroke="#666" stroke-width="1.8"/></svg></span>
<span class="t g" style="left:1335px">Google-managed key</span>
<span class="t g" style="left:1522px">–</span>
<span class="t g" style="left:1721px">None</span>
<span class="ic" style="left:1843px;top:9px"><svg width="4" height="13" viewBox="0 0 4 13"><circle cx="2" cy="1.8" r="1.65" fill="#000"/><circle cx="2" cy="6.5" r="1.65" fill="#000"/><circle cx="2" cy="11.2" r="1.65" fill="#000"/></svg></span>
</div>
<div class="row" style="top:798px">
<span class="cb" style="left:78px"></span>
<span class="ic" style="left:101px;top:8px"><svg width="14" height="14" viewBox="0 0 14 14" shape-rendering="crispEdges"><rect x="0" y="0" width="14" height="14" rx="1.8" fill="#a6a6a6" shape-rendering="geometricPrecision"/><rect x="3" y="3" width="8" height="1" fill="#fff"/><rect x="3" y="5" width="8" height="1" fill="#fff"/><rect x="3" y="7" width="8" height="1" fill="#fff"/><rect x="3" y="9" width="6" height="1" fill="#fff"/></svg></span>
<span class="t nm" style="left:124px">monoblock-2.html</span>
<span class="t g r" style="right:1279px">17.39 KB</span>
<span class="t g" style="left:606px">text/html</span>
<span class="t g" style="left:818px">Standard</span><span class="t g" style="left:941px">20/02/2020, 10:01:24 UTC+2</span>
<span class="ic" style="left:1183px;top:8px"><svg width="14" height="13" viewBox="0 0 14 13"><path d="M7 1.2L12.8 11.1H1.2z" fill="#f4b400" stroke="#f4b400" stroke-width="1.6" stroke-linejoin="round"/><rect x="6" y="4" width="2" height="4" fill="#fff"/><rect x="6" y="9" width="2" height="1.8" fill="#fff"/></svg></span>
<span class="t g" style="left:1206px">Public</span>
<span class="ic" style="left:1243px;top:9px"><svg width="16" height="10" viewBox="0 0 16 10"><path d="M6.8 0.9H4.6a4.1 4.1 0 0 0 0 8.2h2.2M9.2 0.9h2.2a4.1 4.1 0 0 1 0 8.2H9.2M5 5h6" fill="none" stroke="#666" stroke-width="1.8"/></svg></span>
<span class="t g" style="left:1335px">Google-managed key</span>
<span class="t g" style="left:1522px">–</span>
<span class="t g" style="left:1721px">None</span>
<span class="ic" style="left:1843px;top:9px"><svg width="4" height="13" viewBox="0 0 4 13"><circle cx="2" cy="1.8" r="1.65" fill="#000"/><circle cx="2" cy="6.5" r="1.65" fill="#000"/><circle cx="2" cy="11.2" r="1.65" fill="#000"/></svg></span>
</div>
<div class="row" style="top:830px">
<span class="cb" style="left:78px"></span>
<span class="ic" style="left:101px;top:8px"><svg width="14" height="14" viewBox="0 0 14 14" shape-rendering="crispEdges"><rect x="0" y="0" width="14" height="14" rx="1.8" fill="#a6a6a6" shape-rendering="geometricPrecision"/><rect x="3" y="3" width="8" height="1" fill="#fff"/><rect x="3" y="5" width="8" height="1" fill="#fff"/><rect x="3" y="7" width="8" height="1" fill="#fff"/><rect x="3" y="9" width="6" height="1" fill="#fff"/></svg></span>
<span class="t nm" style="left:124px">monoblock-3.html</span>
<span class="t g r" style="right:1279px">17.72 KB</span>
<span class="t g" style="left:606px">text/html</span>
<span class="t g" style="left:818px">Standard</span><span class="t g" style="left:941px">20/02/2020, 10:01:24 UTC+2</span>
<span class="ic" style="left:1183px;top:8px"><svg width="14" height="13" viewBox="0 0 14 13"><path d="M7 1.2L12.8 11.1H1.2z" fill="#f4b400" stroke="#f4b400" stroke-width="1.6" stroke-linejoin="round"/><rect x="6" y="4" width="2" height="4" fill="#fff"/><rect x="6" y="9" width="2" height="1.8" fill="#fff"/></svg></span>
<span class="t g" style="left:1206px">Public</span>
<span class="ic" style="left:1243px;top:9px"><svg width="16" height="10" viewBox="0 0 16 10"><path d="M6.8 0.9H4.6a4.1 4.1 0 0 0 0 8.2h2.2M9.2 0.9h2.2a4.1 4.1 0 0 1 0 8.2H9.2M5 5h6" fill="none" stroke="#666" stroke-width="1.8"/></svg></span>
<span class="t g" style="left:1335px">Google-managed key</span>
<span class="t g" style="left:1522px">–</span>
<span class="t g" style="left:1721px">None</span>
<span class="ic" style="left:1843px;top:9px"><svg width="4" height="13" viewBox="0 0 4 13"><circle cx="2" cy="1.8" r="1.65" fill="#000"/><circle cx="2" cy="6.5" r="1.65" fill="#000"/><circle cx="2" cy="11.2" r="1.65" fill="#000"/></svg></span>
</div>
<div class="row" style="top:862px">
<span class="cb" style="left:78px"></span>
<span class="ic" style="left:101px;top:8px"><svg width="14" height="14" viewBox="0 0 14 14" shape-rendering="crispEdges"><rect x="0" y="0" width="14" height="14" rx="1.8" fill="#a6a6a6" shape-rendering="geometricPrecision"/><rect x="3" y="3" width="8" height="1" fill="#fff"/><rect x="3" y="5" width="8" height="1" fill="#fff"/><rect x="3" y="7" width="8" height="1" fill="#fff"/><rect x="3" y="9" width="6" height="1" fill="#fff"/></svg></span>
<span class="t nm" style="left:124px">multirock-eco-treatment-modules-parallel-installation.html</span>
<span class="t g r" style="right:1279px">16.95 KB</span>
<span class="t g" style="left:606px">text/html</span>
<span class="t g" style="left:818px">Standard</span><span class="t g" style="left:941px">20/02/2020, 10:01:24 UTC+2</span>
<span class="ic" style="left:1183px;top:8px"><svg width="14" height="13" viewBox="0 0 14 13"><path d="M7 1.2L12.8 11.1H1.2z" fill="#f4b400" stroke="#f4b400" stroke-width="1.6" stroke-linejoin="round"/><rect x="6" y="4" width="2" height="4" fill="#fff"/><rect x="6" y="9" width="2" height="1.8" fill="#fff"/></svg></span>
<span class="t g" style="left:1206px">Public</span>
<span class="ic" style="left:1243px;top:9px"><svg width="16" height="10" viewBox="0 0 16 10"><path d="M6.8 0.9H4.6a4.1 4.1 0 0 0 0 8.2h2.2M9.2 0.9h2.2a4.1 4.1 0 0 1 0 8.2H9.2M5 5h6" fill="none" stroke="#666" stroke-width="1.8"/></svg></span>
<span class="t g" style="left:1335px">Google-managed key</span>
<span class="t g" style="left:1522px">–</span>
<span class="t g" style="left:1721px">None</span>
<span class="ic" style="left:1843px;top:9px"><svg width="4" height="13" viewBox="0 0 4 13"><circle cx="2" cy="1.8" r="1.65" fill="#000"/><circle cx="2" cy="6.5" r="1.65" fill="#000"/><circle cx="2" cy="11.2" r="1.65" fill="#000"/></svg></span>
</div>
<div class="row" style="top:894px">
<span class="cb" style="left:78px"></span>
<span class="ic" style="left:101px;top:8px"><svg width="14" height="14" viewBox="0 0 14 14" shape-rendering="crispEdges"><rect x="0" y="0" width="14" height="14" rx="1.8" fill="#a6a6a6" shape-rendering="geometricPrecision"/><rect x="3" y="3" width="8" height="1" fill="#fff"/><rect x="3" y="5" width="8" height="1" fill="#fff"/><rect x="3" y="7" width="8" height="1" fill="#fff"/><rect x="3" y="9" width="6" height="1" fill="#fff"/></svg></span>
<span class="t nm" style="left:124px">precipitator-bio-st1-10000-single-chamber-primary-settler.html</span>
<span class="t g r" style="right:1279px">18.14 KB</span>
<span class="t g" style="left:606px">text/html</span>
<span class="t g" style="left:818px">Standard</span><span class="t g" style="left:941px">20/02/2020, 10:01:24 UTC+2</span>
<span class="ic" style="left:1183px;top:8px"><svg width="14" height="13" viewBox="0 0 14 13"><path d="M7 1.2L12.8 11.1H1.2z" fill="#f4b400" stroke="#f4b400" stroke-width="1.6" stroke-linejoin="round"/><rect x="6" y="4" width="2" height="4" fill="#fff"/><rect x="6" y="9" width="2" height="1.8" fill="#fff"/></svg></span>
<span class="t g" style="left:1206px">Public</span>
<span class="ic" style="left:1243px;top:9px"><svg width="16" height="10" viewBox="0 0 16 10"><path d="M6.8 0.9H4.6a4.1 4.1 0 0 0 0 8.2h2.2M9.2 0.9h2.2a4.1 4.1 0 0 1 0 8.2H9.2M5 5h6" fill="none" stroke="#666" stroke-width="1.8"/></svg></span>
<span class="t g" style="left:1335px">Google-managed key</span>
<span class="t g" style="left:1522px">–</span>
<span class="t g" style="left:1721px">None</span>
<span class="ic" style="left:1843px;top:9px"><svg width="4" height="13" viewBox="0 0 4 13"><circle cx="2" cy="1.8" r="1.65" fill="#000"/><circle cx="2" cy="6.5" r="1.65" fill="#000"/><circle cx="2" cy="11.2" r="1.65" fill="#000"/></svg></span>
</div>
<div class="row" style="top:926px">
<span class="cb" style="left:78px"></span>
<span class="ic" style="left:101px;top:8px"><svg width="14" height="14" viewBox="0 0 14 14" shape-rendering="crispEdges"><rect x="0" y="0" width="14" height="14" rx="1.8" fill="#a6a6a6" shape-rendering="geometricPrecision"/><rect x="3" y="3" width="8" height="1" fill="#fff"/><rect x="3" y="5" width="8" height="1" fill="#fff"/><rect x="3" y="7" width="8" height="1" fill="#fff"/><rect x="3" y="9" width="6" height="1" fill="#fff"/></svg></span>
<span class="t nm" style="left:124px">precipitator-single-chamber-primary-precipitator-bio-st1-1500.html</span>
<span class="t g r" style="right:1279px">18.19 KB</span>
<span class="t g" style="left:606px">text/html</span>
<span class="t g" style="left:818px">Standard</span><span class="t g" style="left:941px">20/02/2020, 10:01:24 UTC+2</span>
<span class="ic" style="left:1183px;top:8px"><svg width="14" height="13" viewBox="0 0 14 13"><path d="M7 1.2L12.8 11.1H1.2z" fill="#f4b400" stroke="#f4b400" stroke-width="1.6" stroke-linejoin="round"/><rect x="6" y="4" width="2" height="4" fill="#fff"/><rect x="6" y="9" width="2" height="1.8" fill="#fff"/></svg></span>
<span class="t g" style="left:1206px">Public</span>
<span class="ic" style="left:1243px;top:9px"><svg width="16" height="10" viewBox="0 0 16 10"><path d="M6.8 0.9H4.6a4.1 4.1 0 0 0 0 8.2h2.2M9.2 0.9h2.2a4.1 4.1 0 0 1 0 8.2H9.2M5 5h6" fill="none" stroke="#666" stroke-width="1.8"/></svg></span>
<span class="t g" style="left:1335px">Google-managed key</span>
<span class="t g" style="left:1522px">–</span>
<span class="t g" style="left:1721px">None</span>
<span class="ic" style="left:1843px;top:9px"><svg width="4" height="13" viewBox="0 0 4 13"><circle cx="2" cy="1.8" r="1.65" fill="#000"/><circle cx="2" cy="6.5" r="1.65" fill="#000"/><circle cx="2" cy="11.2" r="1.65" fill="#000"/></svg></span>
</div>
<div class="row" style="top:958px">
<span class="cb" style="left:78px"></span>
<span class="ic" style="left:101px;top:8px"><svg width="14" height="14" viewBox="0 0 14 14" shape-rendering="crispEdges"><rect x="0" y="0" width="14" height="14" rx="1.8" fill="#a6a6a6" shape-rendering="geometricPrecision"/><rect x="3" y="3" width="8" height="1" fill="#fff"/><rect x="3" y="5" width="8" height="1" fill="#fff"/><rect x="3" y="7" width="8" height="1" fill="#fff"/><rect x="3" y="9" width="6" height="1" fill="#fff"/></svg></span>
<span class="t nm" style="left:124px">products-wastewater-treatment-plants.html</span>
<span class="t g r" style="right:1279px">29.32 KB</span>
<span class="t g" style="left:606px">text/html</span>
<span class="t g" style="left:818px">Standard</span><span class="t g" style="left:941px">20/02/2020, 10:01:25 UTC+2</span>
<span class="ic" style="left:1183px;top:8px"><svg width="14" height="13" viewBox="0 0 14 13"><path d="M7 1.2L12.8 11.1H1.2z" fill="#f4b400" stroke="#f4b400" stroke-width="1.6" stroke-linejoin="round"/><rect x="6" y="4" width="2" height="4" fill="#fff"/><rect x="6" y="9" width="2" height="1.8" fill="#fff"/></svg></span>
<span class="t g" style="left:1206px">Public</span>
<span class="ic" style="left:1243px;top:9px"><svg width="16" height="10" viewBox="0 0 16 10"><path d="M6.8 0.9H4.6a4.1 4.1 0 0 0 0 8.2h2.2M9.2 0.9h2.2a4.1 4.1 0 0 1 0 8.2H9.2M5 5h6" fill="none" stroke="#666" stroke-width="1.8"/></svg></span>
<span class="t g" style="left:1335px">Google-managed key</span>
<span class="t g" style="left:1522px">–</span>
<span class="t g" style="left:1721px">None</span>
<span class="ic" style="left:1843px;top:9px"><svg width="4" height="13" viewBox="0 0 4 13"><circle cx="2" cy="1.8" r="1.65" fill="#000"/><circle cx="2" cy="6.5" r="1.65" fill="#000"/><circle cx="2" cy="11.2" r="1.65" fill="#000"/></svg></span>
</div>
</div></body></html>
